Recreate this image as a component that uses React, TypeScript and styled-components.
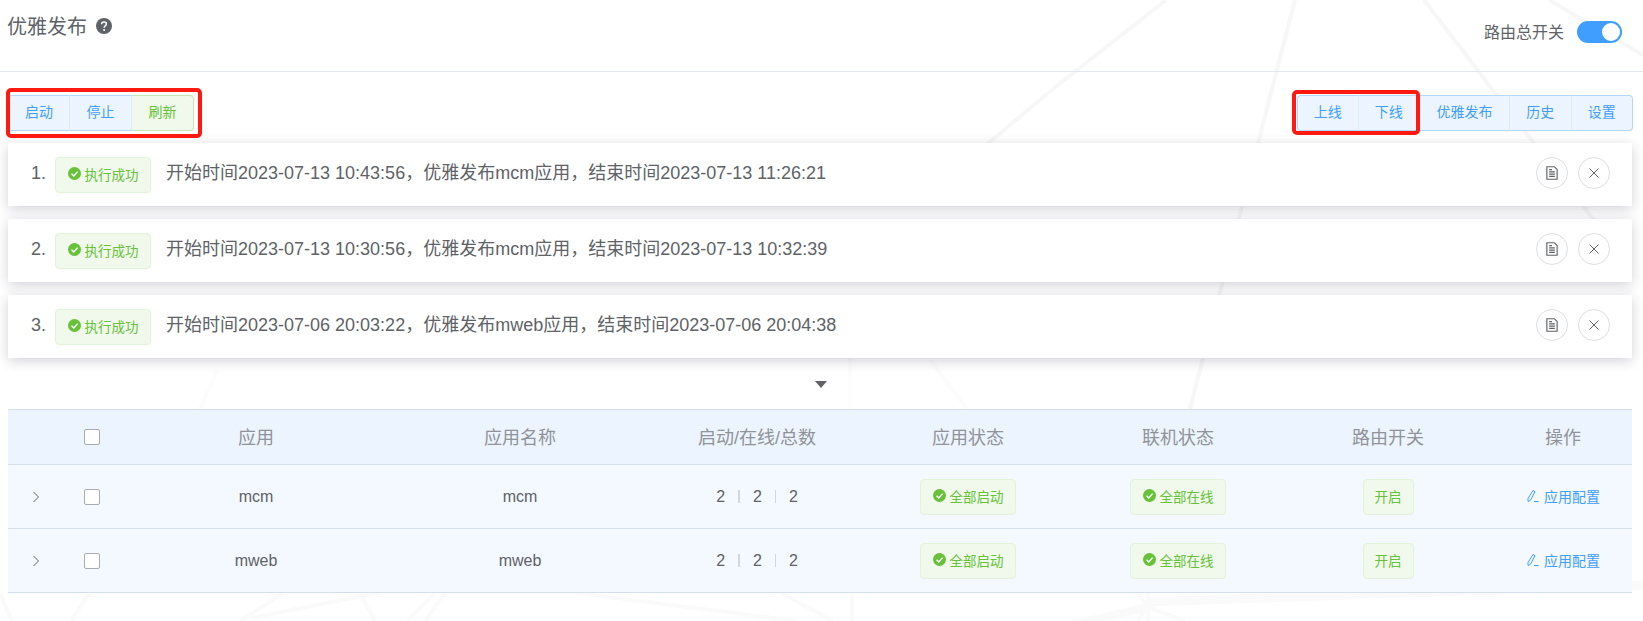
import React from "react";
import styled, { createGlobalStyle } from "styled-components";

const Global = createGlobalStyle`
  html, body { margin: 0; padding: 0; background: #fff; }
  body { font-family: "Liberation Sans", "Noto Sans CJK SC", sans-serif; color: #606266; }
`;

const Page = styled.div`
  position: relative;
  width: 1643px;
  height: 621px;
  overflow: hidden;
  background: #fff;
`;

const Backdrop = styled.svg`
  position: absolute;
  inset: 0;
  width: 1643px;
  height: 621px;
`;

const Content = styled.div`
  position: relative;
  display: flex;
  flex-direction: column;
  padding: 0 11px 0 8px;
`;

const Header = styled.header`
  display: flex;
  justify-content: space-between;
  height: 72px;
  margin: 0 -11px 0 -8px;
  padding: 13px 21px 0 8px;
  box-sizing: border-box;
  border-bottom: 1px solid #e4e7ed;
`;

const TitleBox = styled.div`
  display: flex;
  align-items: flex-start;
  gap: 9px;
`;

const Title = styled.h1`
  margin: 1px 0 0 -1px;
  font-size: 20px;
  line-height: 27px;
  font-weight: 400;
  color: #5f6368;
`;

const HelpIcon = styled.svg`
  width: 16px;
  height: 16px;
  margin-top: 5px;
`;

const SwitchBox = styled.div`
  display: flex;
  align-items: center;
  gap: 13px;
  height: 32px;
  margin-top: 3px;
`;

const SwitchLabel = styled.span`
  margin-top: -3px;
  font-size: 16px;
  color: #606266;
`;

const SwitchTrack = styled.span`
  position: relative;
  display: block;
  width: 45px;
  height: 22px;
  border-radius: 11px;
  background: #409eff;
`;

const SwitchKnob = styled.span`
  position: absolute;
  right: 2px;
  top: 2px;
  width: 18px;
  height: 18px;
  border-radius: 50%;
  background: #fff;
`;

const Toolbar = styled.div`
  display: flex;
  justify-content: space-between;
  padding: 23px 0 12px;
`;

const Group = styled.div`
  display: flex;
`;

const RightGroup = styled(Group)`
  margin-right: -1px;
`;

const GroupBtn = styled.button<{ $tone?: "blue" | "green"; $w: number }>`
  height: 36px;
  width: ${(p) => p.$w}px;
  padding: 0 0 4px;
  font: 14px "Liberation Sans", "Noto Sans CJK SC", sans-serif;
  color: ${(p) => (p.$tone === "green" ? "#67c23a" : "#409eff")};
  background: ${(p) => (p.$tone === "green" ? "#f0f9eb" : "#ecf5ff")};
  border: 1px solid ${(p) => (p.$tone === "green" ? "#c2e7b0" : "#b3d8ff")};
  border-left-width: 0;
  border-right-color: #d9ecff;
  &:first-child {
    border-left-width: 1px;
    border-radius: 4px 0 0 4px;
  }
  &:last-child {
    border-right-color: ${(p) => (p.$tone === "green" ? "#c2e7b0" : "#b3d8ff")};
    border-radius: 0 4px 4px 0;
  }
`;

const RedBox = styled.div<{ $left: number; $top: number; $w: number; $h: number }>`
  position: absolute;
  left: ${(p) => p.$left}px;
  top: ${(p) => p.$top}px;
  width: ${(p) => p.$w}px;
  height: ${(p) => p.$h}px;
  box-sizing: border-box;
  border: 4px solid #fe1a10;
  border-radius: 5px;
  pointer-events: none;
`;

const Cards = styled.div`
  display: flex;
  flex-direction: column;
  gap: 13px;
`;

const Card = styled.div`
  display: flex;
  align-items: center;
  height: 63px;
  padding: 0 22px 0 0;
  box-sizing: border-box;
  background: #fff;
  box-shadow: 0 3px 12px rgba(30, 30, 60, 0.2);
`;

const Index = styled.span`
  width: 47px;
  margin-top: -2px;
  padding-right: 9px;
  box-sizing: border-box;
  text-align: right;
  font-size: 18px;
  color: #606266;
`;

const Tag = styled.span<{ $w?: number }>`
  display: inline-flex;
  align-items: center;
  justify-content: center;
  gap: 4px;
  box-sizing: border-box;
  width: ${(p) => p.$w ?? 96}px;
  height: 36px;
  padding-bottom: 2px;
  font-size: 13.5px;
  color: #67c23a;
  background: #f0f9eb;
  border: 1px solid #e1f3d8;
  border-radius: 4px;
`;

const CardText = styled.span`
  flex: 1;
  margin: -8px 0 0 15px;
  font-size: 18px;
  color: #606266;
`;

const RoundBtn = styled.button`
  display: flex;
  align-items: center;
  justify-content: center;
  width: 32px;
  height: 32px;
  margin: -4px 0 0 10px;
  padding: 0;
  border: 1px solid #dcdfe6;
  border-radius: 50%;
  background: #fff;
`;

const Expander = styled.div`
  display: flex;
  justify-content: center;
  align-items: center;
  height: 51px;
  padding-left: 2px;
`;

const Triangle = styled.span`
  width: 0;
  height: 0;
  margin-top: 1px;
  border-left: 6px solid transparent;
  border-right: 6px solid transparent;
  border-top: 7px solid #606266;
`;

const Table = styled.div`
  display: flex;
  flex-direction: column;
  border-top: 1px solid #d5dfec;
`;

const Row = styled.div<{ $head?: boolean }>`
  display: grid;
  grid-template-columns: 56px 56px 272px 256px 218px 204px 216px 204px 142px;
  align-items: center;
  height: ${(p) => (p.$head ? "54px" : "63px")};
  background: ${(p) => (p.$head ? "#ecf4ff" : "#f4f9ff")};
  border-bottom: 1px solid #d5dfec;
  font-size: ${(p) => (p.$head ? "18px" : "16px")};
  color: ${(p) => (p.$head ? "#909399" : "#606266")};
`;

const Cell = styled.div`
  display: flex;
  justify-content: center;
  align-items: center;
`;

const OpCell = styled(Cell)`
  padding-left: 4px;
`;

const HeadLabel = styled.span`
  margin-top: -2px;
`;

const Check = styled.span`
  display: block;
  width: 14px;
  height: 14px;
  border: 1px solid #a8abb2;
  border-radius: 2px;
  background: #fff;
`;

const Count = styled.span`
  display: flex;
  align-items: center;
  font-size: 16px;
  gap: 13px;
`;

const Sep = styled.span<{ $bold?: boolean }>`
  width: ${(p) => (p.$bold ? 2 : 1)}px;
  height: 13px;
  background: #d0d7e2;
`;

const LinkBtn = styled.span`
  display: flex;
  align-items: center;
  gap: 5px;
  padding-bottom: 2px;
  font-size: 14px;
  color: #409eff;
`;

const CheckCircle = () => (
  <svg width="13" height="13" viewBox="0 0 14 14">
    <circle cx="7" cy="7" r="7" fill="#67c23a" />
    <path d="M3.8 7.2 6.2 9.6 10.3 5" fill="none" stroke="#fff" strokeWidth="1.5" />
  </svg>
);

const Doc = () => (
  <svg width="16" height="16" viewBox="0 0 14 14" fill="none" stroke="#606266" strokeWidth="1">
    <path d="M2.5 1.5H9L11.5 4V12.5H2.5Z" />
    <path d="M4.5 6H9.5M4.5 8H9.5M4.5 10H9.5M4.5 4H7" />
  </svg>
);

const Close = () => (
  <svg width="12" height="12" viewBox="0 0 12 12" fill="none" stroke="#606266" strokeWidth="1">
    <path d="M1.5 1.5 10.5 10.5M10.5 1.5 1.5 10.5" />
  </svg>
);

const Pencil = () => (
  <svg width="13" height="14" viewBox="0 0 13 14" fill="none" stroke="#409eff" strokeWidth="1">
    <path d="M7 1.5 9 2.8 4.5 11.2 2 12.5 2 9.5Z" />
    <path d="M8 12.5H12.5" />
  </svg>
);

const Chevron = () => (
  <svg width="8" height="12" viewBox="0 0 8 12" fill="none" stroke="#606266" strokeWidth="1">
    <path d="M1.5 1 6.5 6 1.5 11" />
  </svg>
);

const records = [
  "开始时间2023-07-13 10:43:56，优雅发布mcm应用，结束时间2023-07-13 11:26:21",
  "开始时间2023-07-13 10:30:56，优雅发布mcm应用，结束时间2023-07-13 10:32:39",
  "开始时间2023-07-06 20:03:22，优雅发布mweb应用，结束时间2023-07-06 20:04:38",
];

const heads = ["应用", "应用名称", "启动/在线/总数", "应用状态", "联机状态", "路由开关", "操作"];

export default function App() {
  return (
    <Page>
      <Global />
      <Backdrop viewBox="0 0 1643 621" fill="none" stroke="#f7f7f8" strokeWidth="4">
        <path d="M1166 0 1053 89 980 150" />
        <path d="M1295 0 1272 89 1190 409" />
        <path d="M1424 0 1492 89 1625 260" />
        <path d="M1549 0 1643 55" />
        <path d="M850 358V409M930 360 967 409M217 370 200 409" stroke="#fcfcfc" />
        <g stroke="#fafafa">
          <path d="M0 593 12 621M89 593 71 621M283 593 241 621M377 593 251 618M362 598 375 621M435 593 407 621M445 593 425 621" />
          <path d="M576 593 797 621M781 593 833 621M852 593V621M1137 593 1148 607M1148 593V621M1148 607 1137 621M1148 607 1185 621" />
          <path d="M1148 607 1006 640" strokeWidth="8" />
          <path d="M1148 602 1643 585" strokeWidth="9" />
        </g>
      </Backdrop>
      <Content>
        <Header>
          <TitleBox>
            <Title>优雅发布</Title>
            <HelpIcon viewBox="0 0 16 16">
              <circle cx="8" cy="8" r="8" fill="#5f6368" />
              <path d="M5.6 6.2C5.6 4.8 6.7 4 8 4s2.4.8 2.4 2.1c0 1.9-2.3 1.8-2.3 3.6" fill="none" stroke="#fff" strokeWidth="1.5" />
              <circle cx="8.1" cy="11.9" r="1" fill="#fff" />
            </HelpIcon>
          </TitleBox>
          <SwitchBox>
            <SwitchLabel>路由总开关</SwitchLabel>
            <SwitchTrack><SwitchKnob /></SwitchTrack>
          </SwitchBox>
        </Header>
        <Toolbar>
          <Group>
            <GroupBtn $w={62}>启动</GroupBtn>
            <GroupBtn $w={62}>停止</GroupBtn>
            <GroupBtn $w={62} $tone="green">刷新</GroupBtn>
          </Group>
          <RightGroup>
            <GroupBtn $w={61.5}>上线</GroupBtn>
            <GroupBtn $w={61.5}>下线</GroupBtn>
            <GroupBtn $w={90}>优雅发布</GroupBtn>
            <GroupBtn $w={61.5}>历史</GroupBtn>
            <GroupBtn $w={61.5}>设置</GroupBtn>
          </RightGroup>
        </Toolbar>
        <Cards>
          {records.map((r, i) => (
            <Card key={r}>
              <Index>{i + 1}.</Index>
              <Tag><CheckCircle />执行成功</Tag>
              <CardText>{r}</CardText>
              <RoundBtn><Doc /></RoundBtn>
              <RoundBtn><Close /></RoundBtn>
            </Card>
          ))}
        </Cards>
        <Expander><Triangle /></Expander>
        <Table>
          <Row $head>
            <Cell />
            <Cell><Check /></Cell>
            {heads.slice(0, 6).map((h) => <Cell key={h}><HeadLabel>{h}</HeadLabel></Cell>)}
            <OpCell><HeadLabel>{heads[6]}</HeadLabel></OpCell>
          </Row>
          {["mcm", "mweb"].map((n) => (
            <Row key={n}>
              <Cell><Chevron /></Cell>
              <Cell><Check /></Cell>
              <Cell>{n}</Cell>
              <Cell>{n}</Cell>
              <Cell>
                <Count>2<Sep $bold />2<Sep />2</Count>
              </Cell>
              <Cell><Tag><CheckCircle />全部启动</Tag></Cell>
              <Cell><Tag><CheckCircle />全部在线</Tag></Cell>
              <Cell><Tag $w={51}>开启</Tag></Cell>
              <OpCell><LinkBtn><Pencil />应用配置</LinkBtn></OpCell>
            </Row>
          ))}
        </Table>
      </Content>
      <RedBox $left={6} $top={88} $w={196} $h={50} />
      <RedBox $left={1292} $top={90} $w={128} $h={45} />
    </Page>
  );
}
